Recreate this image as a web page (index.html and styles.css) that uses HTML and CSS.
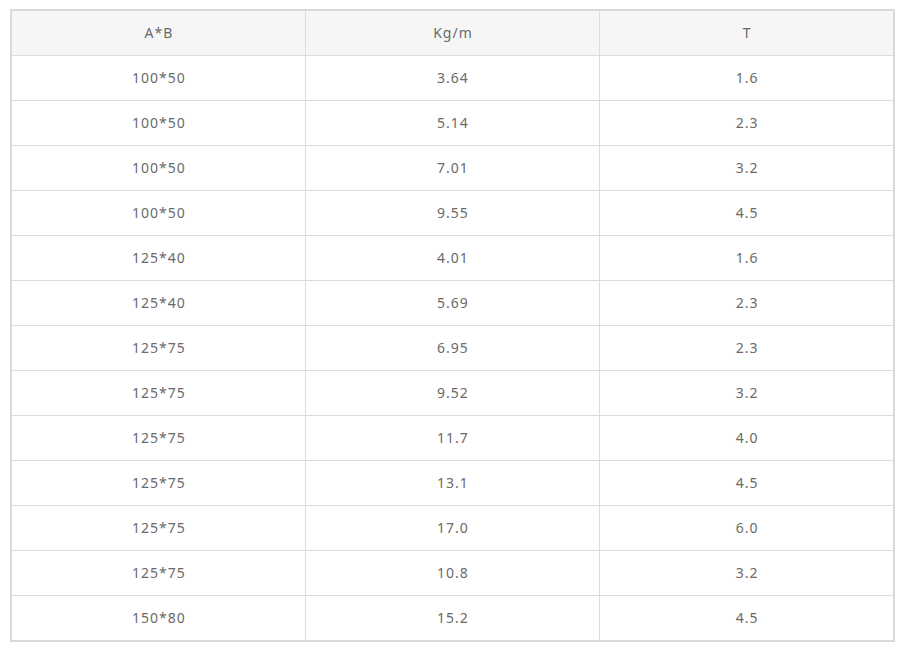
FILE: index.html
```html
<!DOCTYPE html>
<html>
<head>
<meta charset="utf-8">
<link rel="stylesheet" href="styles.css">
</head>
<body>
<table class="spec">
  <thead>
    <tr><th>A*B</th><th>Kg/m</th><th>T</th></tr>
  </thead>
  <tbody>
    <tr><td>100*50</td><td>3.64</td><td>1.6</td></tr>
    <tr><td>100*50</td><td>5.14</td><td>2.3</td></tr>
    <tr><td>100*50</td><td>7.01</td><td>3.2</td></tr>
    <tr><td>100*50</td><td>9.55</td><td>4.5</td></tr>
    <tr><td>125*40</td><td>4.01</td><td>1.6</td></tr>
    <tr><td>125*40</td><td>5.69</td><td>2.3</td></tr>
    <tr><td>125*75</td><td>6.95</td><td>2.3</td></tr>
    <tr><td>125*75</td><td>9.52</td><td>3.2</td></tr>
    <tr><td>125*75</td><td>11.7</td><td>4.0</td></tr>
    <tr><td>125*75</td><td>13.1</td><td>4.5</td></tr>
    <tr><td>125*75</td><td>17.0</td><td>6.0</td></tr>
    <tr><td>125*75</td><td>10.8</td><td>3.2</td></tr>
    <tr><td>150*80</td><td>15.2</td><td>4.5</td></tr>
  </tbody>
</table>
</body>
</html>
```
FILE: styles.css
```css
html, body {
  margin: 0;
  padding: 0;
  background: #fff;
}
body {
  padding: 9px 8px 0 10px;
  font-family: "Noto Sans", "Open Sans", sans-serif;
  font-size: 14px;
  letter-spacing: 1px;
  color: #6a6a6a;
}
.spec {
  width: 885px;
  border-collapse: collapse;
  border: 2px solid #d9d9d9;
  table-layout: fixed;
}
.spec th, .spec td {
  border: 1px solid #dcdcdc;
  height: 42px;
  padding: 0 0 2px 1px;
  text-align: center;
  vertical-align: middle;
  font-weight: normal;
}
.spec th {
  background: #f6f6f6;
}
```
